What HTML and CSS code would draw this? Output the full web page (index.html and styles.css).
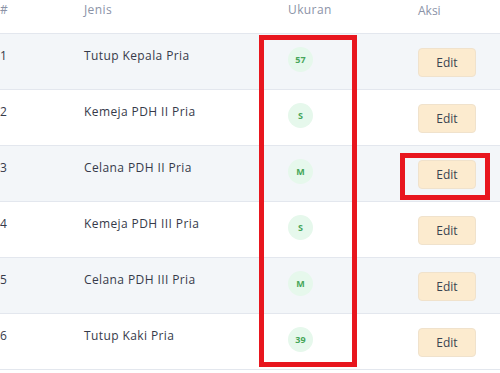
FILE: index.html
```html
<!DOCTYPE html>
<html>
<head>
<meta charset="utf-8">
<link rel="stylesheet" href="styles.css">
</head>
<body>
<div class="wrap">
  <table class="tbl">
    <colgroup>
      <col class="c-no"><col class="c-jenis"><col class="c-ukuran"><col class="c-aksi">
    </colgroup>
    <thead>
      <tr>
        <th>#</th><th>Jenis</th><th>Ukuran</th><th class="aksi-h">Aksi</th>
      </tr>
    </thead>
    <tbody>
      <tr class="odd"><td>1</td><td>Tutup Kepala Pria</td><td><span class="badge">57</span></td><td><button class="btn">Edit</button></td></tr>
      <tr><td>2</td><td>Kemeja PDH II Pria</td><td><span class="badge">S</span></td><td><button class="btn">Edit</button></td></tr>
      <tr class="odd"><td>3</td><td>Celana PDH II Pria</td><td><span class="badge">M</span></td><td><button class="btn">Edit</button></td></tr>
      <tr><td>4</td><td>Kemeja PDH III Pria</td><td><span class="badge">S</span></td><td><button class="btn">Edit</button></td></tr>
      <tr class="odd"><td>5</td><td>Celana PDH III Pria</td><td><span class="badge">M</span></td><td><button class="btn">Edit</button></td></tr>
      <tr><td>6</td><td>Tutup Kaki Pria</td><td><span class="badge">39</span></td><td><button class="btn">Edit</button></td></tr>
    </tbody>
  </table>
  <div class="mark mark-col"></div>
  <div class="mark mark-btn"></div>
</div>
</body>
</html>
```

FILE: styles.css
```css
html, body {
  margin: 0;
  padding: 0;
  background: #ffffff;
  overflow: hidden;
}
.wrap {
  position: relative;
  width: 500px;
  height: 373px;
  overflow: hidden;
}
.tbl {
  border-collapse: collapse;
  margin-left: -12px;
  width: 530px;
  table-layout: fixed;
  font-family: "Open Sans", "Liberation Sans", sans-serif;
  font-size: 12px;
  letter-spacing: 0.4px;
  color: #363a4a;
}
.c-no { width: 84px; }
.c-jenis { width: 204px; }
.c-ukuran { width: 130px; }
.c-aksi { width: 112px; }
.tbl th {
  height: 33px;
  box-sizing: border-box;
  padding: 1px 0 0 12px;
  text-align: left;
  vertical-align: top;
  font-weight: 400;
  line-height: 18px;
  color: #8b93a7;
  border-bottom: 1px solid #e3e7ee;
}
.tbl th.aksi-h { padding-top: 2px; letter-spacing: 0; }
.tbl td {
  height: 56px;
  box-sizing: border-box;
  padding: 13px 0 0 12px;
  vertical-align: top;
  line-height: 18px;
  border-bottom: 1px solid #e3e7ee;
}
.tbl tr.odd td { background: #f3f6f9; }
.badge {
  display: inline-flex;
  align-items: center;
  justify-content: center;
  width: 25px;
  height: 25px;
  border-radius: 50%;
  background: #e6f8ec;
  color: #47a65a;
  font-size: 9px;
  font-weight: 700;
  letter-spacing: 0;
  line-height: 1;
}
.btn {
  display: block;
  margin-top: 1px;
  width: 58px;
  height: 29px;
  padding: 0;
  border: 1px solid #f0e2cc;
  border-radius: 4px;
  background: #fcebcf;
  font-family: "Open Sans", "Liberation Sans", sans-serif;
  font-size: 12px;
  letter-spacing: 0;
  color: #3a4350;
}
.mark {
  position: absolute;
  box-sizing: border-box;
  border: 5px solid #e8161e;
}
.mark-col {
  left: 259px;
  top: 35px;
  width: 98px;
  height: 332px;
}
.mark-btn {
  left: 400px;
  top: 153px;
  width: 90px;
  height: 47px;
}
```
